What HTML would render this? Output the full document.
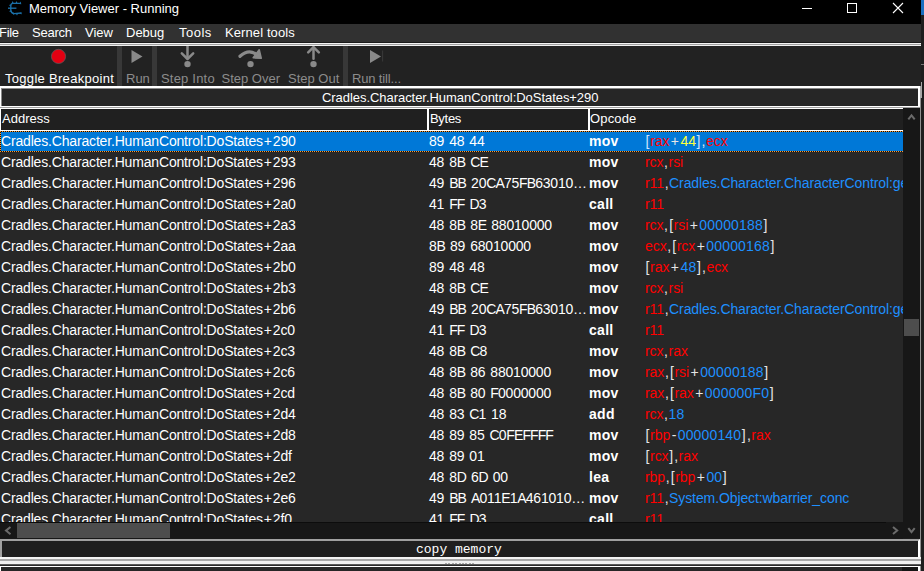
<!DOCTYPE html>
<html><head><meta charset="utf-8">
<style>
*{margin:0;padding:0;box-sizing:border-box}
html,body{width:924px;height:571px;overflow:hidden;background:#1c1c1c}
body{position:relative;font-family:"Liberation Sans",sans-serif;font-size:13px;color:#fff}
.a{position:absolute}
.t{position:absolute;white-space:nowrap;line-height:15px}
#title{left:0;top:0;width:921px;height:24px;background:#000}
#menu{left:0;top:24px;width:921px;height:18px;background:#313131}
#tb{left:0;top:46px;width:921px;height:40px;background:#222}
.sep{position:absolute;top:0;width:5px;height:40px;background:#383838}
.lbl{color:#8c8c8c}
.row{position:absolute;left:0;width:903px;height:21px;line-height:21px;white-space:nowrap;overflow:hidden;font-size:14px}
.row span{position:absolute;top:0px}
.row .ca{left:1px;letter-spacing:-0.17px}
.row .ca i{font-style:normal;padding:0 1px}
.row .cb{left:429px;letter-spacing:-0.2px;word-spacing:1.3px}
.row .cb b{font-weight:normal;letter-spacing:-0.9px}
.row .cc{left:589px;font-weight:bold;letter-spacing:0.3px}
.row .cd{left:645px;letter-spacing:-0.05px}
.row .cd .n{letter-spacing:0.15px}
.row .cd .s{letter-spacing:-0.1px}
.row .cd .p{padding:0 1.5px}
.row .cd .q{padding:0 0.6px}
.row .cd span{position:static}
.sel{background:#0078d7}
.sel:after{content:"";position:absolute;left:0;top:0;right:0;bottom:0;background:repeating-linear-gradient(90deg,#ff9a2e 0,#ff9a2e 1px,#101010 1px,#101010 2px) top left/100% 1px no-repeat,repeating-linear-gradient(90deg,#ff9a2e 0,#ff9a2e 1px,#101010 1px,#101010 2px) bottom left/100% 1px no-repeat,repeating-linear-gradient(180deg,#ff9a2e 0,#ff9a2e 1px,#101010 1px,#101010 2px) top left/1px 100% no-repeat}
.r{color:#ff0000}
.n,.s{color:#1e90ff}
.w{color:#e6e6e6}
.y{color:#ffff3c}
.b{color:#cfe4ff}
.sel .r{color:#ff0000}
</style></head><body>
<!-- title bar -->
<div id="title" class="a">
  <svg class="a" style="left:4px;top:0px" width="20" height="17" viewBox="0 0 20 17">
    <g fill="none" stroke="#1b70a8" stroke-width="1.35" stroke-linejoin="round">
      <path d="M17 3.4 L8.8 3.4 Q6.8 3.6 6.8 6 L6.8 10.2 Q7.2 13.4 10.2 13.6 L17.4 13"/>
      <path d="M4 8.2 L12.4 8.2"/>
    </g>
    <g fill="#1b70a8">
      <path d="M7.6 3.6 L8.6 1 L9.8 3.6Z"/><path d="M11.4 3.6 L12.5 0.9 L13.6 3.6Z"/><path d="M15.2 3.9 L16.7 1.4 L17.3 4.3Z"/>
      <path d="M8.4 12.6 L9.4 15 L10.8 13.2Z"/><path d="M11.8 13.4 L13 15.4 L14.2 13.3Z"/><path d="M15.6 13.1 L17.4 14.6 L17.6 12.4Z"/>
      <path d="M7 4.6 L4.9 4.9 L6.6 6.6Z"/><path d="M7 10.2 L4.9 11.3 L7.4 12Z"/>
    </g>
  </svg>
  <div class="t" style="left:29px;top:1px">Memory Viewer - Running</div>
  <div class="a" style="left:802px;top:8px;width:10px;height:1px;background:#fff"></div>
  <div class="a" style="left:847px;top:3px;width:10px;height:10px;border:1px solid #fff"></div>
  <svg class="a" style="left:892px;top:2px" width="12" height="12" viewBox="0 0 12 12"><path d="M1 1 L11 11 M11 1 L1 11" stroke="#fff" stroke-width="1.1"/></svg>
</div>
<div class="a" style="left:921px;top:0;width:3px;height:15px;background:#1a6fc0"></div>
<div class="a" style="left:921px;top:15px;width:3px;height:556px;background:#1e1e1e"></div>
<div class="a" style="left:920px;top:24px;width:1px;height:58px;background:#2a2a2a"></div>
<div class="a" style="left:920px;top:82px;width:2px;height:16px;background:#a8a8a8"></div>
<div class="a" style="left:920px;top:98px;width:1px;height:473px;background:#909090"></div>
<div class="a" style="left:921px;top:64px;width:3px;height:1px;background:#777"></div>

<!-- menu -->
<div id="menu" class="a">
  <div class="t" style="left:-1px;top:1px;letter-spacing:-0.3px">File</div>
  <div class="t" style="left:32px;top:1px;letter-spacing:-0.25px">Search</div>
  <div class="t" style="left:85px;top:1px">View</div>
  <div class="t" style="left:126px;top:1px">Debug</div>
  <div class="t" style="left:179px;top:1px;letter-spacing:0.5px">Tools</div>
  <div class="t" style="left:225px;top:1px;letter-spacing:0.1px">Kernel tools</div>
</div>
<div class="a" style="left:0;top:42px;width:921px;height:1px;background:#1a1a1a"></div>
<div class="a" style="left:0;top:43px;width:921px;height:1px;background:#f4f4f4"></div>
<div class="a" style="left:0;top:44px;width:921px;height:1px;background:#a0a0a0"></div>
<div class="a" style="left:0;top:45px;width:921px;height:1px;background:#f0f0f0"></div>

<!-- toolbar -->
<div id="tb" class="a">
  <svg class="a" style="left:48px;top:0px" width="22" height="22" viewBox="0 0 22 22"><circle cx="10.5" cy="10.4" r="7.1" fill="#e30012" stroke="#5a6060" stroke-width="0.7"/></svg>
  <div class="t" style="left:5px;top:25px;letter-spacing:0.3px">Toggle Breakpoint</div>
  <div class="sep" style="left:117px"></div>
  <svg class="a" style="left:128.8px;top:3px" width="16" height="16" viewBox="0 0 16 16"><path d="M2.5 1 L13.5 7.5 L2.5 14 Z" fill="#8a8a8a"/></svg>
  <div class="t lbl" style="left:126px;top:25px">Run</div>
  <div class="sep" style="left:152px"></div>
  <svg class="a" style="left:179px;top:0px" width="18" height="22" viewBox="0 0 18 22"><g stroke="#8a8a8a" stroke-width="2.5" fill="none" stroke-linecap="round" stroke-linejoin="round"><path d="M8.5 0 V12"/><path d="M2.8 7.4 L8.5 13 L14.2 7.4"/></g><circle cx="8.5" cy="18.1" r="3.2" fill="#8a8a8a"/></svg>
  <div class="t lbl" style="left:161px;top:25px;letter-spacing:0.2px">Step Into</div>
  <svg class="a" style="left:236px;top:0px" width="28" height="22" viewBox="0 0 28 22"><path d="M4 10.3 Q13 2 21.5 9.2" stroke="#8a8a8a" stroke-width="3.2" fill="none" stroke-linecap="round"/><path d="M23.2 3.8 L25.2 12.2 L17.2 11.8 Z" fill="#8a8a8a" stroke="#8a8a8a" stroke-width="1.6" stroke-linejoin="round"/><circle cx="14.5" cy="18.1" r="3.2" fill="#8a8a8a"/></svg>
  <div class="t lbl" style="left:221.5px;top:25px">Step Over</div>
  <svg class="a" style="left:305px;top:0px" width="18" height="22" viewBox="0 0 18 22"><g stroke="#8a8a8a" stroke-width="2.5" fill="none" stroke-linecap="round" stroke-linejoin="round"><path d="M8.5 1.5 V12.8"/><path d="M3.2 6.3 L8.5 1.1 L13.8 6.3"/></g><circle cx="8.5" cy="18.1" r="3.2" fill="#8a8a8a"/></svg>
  <div class="t lbl" style="left:288px;top:25px">Step Out</div>
  <div class="sep" style="left:343px"></div>
  <svg class="a" style="left:368px;top:3px" width="18" height="16" viewBox="0 0 18 16"><path d="M2 1 L13 7.5 L2 14 Z" fill="#8a8a8a"/><rect x="14.2" y="1.5" width="0.9" height="11" fill="#3c3c3c"/></svg>
  <div class="t lbl" style="left:352px;top:25px;letter-spacing:-0.15px">Run till...</div>
</div>

<!-- address box -->
<div class="a" style="left:0;top:86px;width:920px;height:21px;border-top:2px solid #fff;border-left:1px solid #fff;border-right:2px solid #fff;border-bottom:1px solid #fff;background:#262626"></div>
<div class="a" style="left:1px;top:88px;width:917px;height:1px;background:#8a8a8a"></div>
<div class="a" style="left:1px;top:88px;width:1px;height:18px;background:#8a8a8a"></div>
<div class="a" style="left:0;top:107px;width:920px;height:1px;background:#a0a0a0"></div>
<div class="t" style="left:322px;top:90px;letter-spacing:-0.05px">Cradles.Character.HumanControl:DoStates+290</div>

<!-- header -->
<div class="a" style="left:0;top:108px;width:903px;height:22px;background:#202020;border-top:1px solid #fff;border-left:1px solid #fff"></div>
<div class="a" style="left:0;top:130px;width:903px;height:1px;background:#fff"></div>
<div class="a" style="left:427px;top:109px;width:2px;height:21px;background:#fff"></div>
<div class="a" style="left:588px;top:109px;width:2px;height:21px;background:#fff"></div>
<div class="t" style="left:2px;top:111px">Address</div>
<div class="t" style="left:430px;top:111px;letter-spacing:-0.3px">Bytes</div>
<div class="t" style="left:590px;top:111px;letter-spacing:0.15px">Opcode</div>

<!-- body -->
<div class="a" style="left:0;top:131px;width:903px;height:391px;background:#272727;overflow:hidden">
<div class="a" style="left:0;top:-131px;width:903px;height:522px">
<div class="row sel" style="top:131px"><span class="ca">Cradles.Character.HumanControl:DoStates<i>+</i>290</span><span class="cb">89 48 44</span><span class="cc">mov</span><span class="cd"><span class="b q">[</span><span class="r">rax</span><span class="w p">+</span><span class="y">44</span><span class="b q">]</span><span class="w q">,</span><span class="r">ecx</span></span></div>
<div class="row" style="top:152px"><span class="ca">Cradles.Character.HumanControl:DoStates<i>+</i>293</span><span class="cb">48 8<b>B</b> <b>CE</b></span><span class="cc">mov</span><span class="cd"><span class="r">rcx</span><span class="w q">,</span><span class="r">rsi</span></span></div>
<div class="row" style="top:173px"><span class="ca">Cradles.Character.HumanControl:DoStates<i>+</i>296</span><span class="cb">49 <b>BB</b> 20<b>CA</b>75<b>FB</b>63010…</span><span class="cc">mov</span><span class="cd"><span class="r">r11</span><span class="w q">,</span><span class="s">Cradles.Character.CharacterControl:get_</span></span></div>
<div class="row" style="top:194px"><span class="ca">Cradles.Character.HumanControl:DoStates<i>+</i>2a0</span><span class="cb">41 <b>FF</b> <b>D</b>3</span><span class="cc">call</span><span class="cd"><span class="r">r11</span></span></div>
<div class="row" style="top:215px"><span class="ca">Cradles.Character.HumanControl:DoStates<i>+</i>2a3</span><span class="cb">48 8<b>B</b> 8<b>E</b> 88010000</span><span class="cc">mov</span><span class="cd"><span class="r">rcx</span><span class="w q">,</span><span class="w q">[</span><span class="r">rsi</span><span class="w p">+</span><span class="n">00000188</span><span class="w q">]</span></span></div>
<div class="row" style="top:236px"><span class="ca">Cradles.Character.HumanControl:DoStates<i>+</i>2aa</span><span class="cb">8<b>B</b> 89 68010000</span><span class="cc">mov</span><span class="cd"><span class="r">ecx</span><span class="w q">,</span><span class="w q">[</span><span class="r">rcx</span><span class="w p">+</span><span class="n">00000168</span><span class="w q">]</span></span></div>
<div class="row" style="top:257px"><span class="ca">Cradles.Character.HumanControl:DoStates<i>+</i>2b0</span><span class="cb">89 48 48</span><span class="cc">mov</span><span class="cd"><span class="w q">[</span><span class="r">rax</span><span class="w p">+</span><span class="n">48</span><span class="w q">]</span><span class="w q">,</span><span class="r">ecx</span></span></div>
<div class="row" style="top:278px"><span class="ca">Cradles.Character.HumanControl:DoStates<i>+</i>2b3</span><span class="cb">48 8<b>B</b> <b>CE</b></span><span class="cc">mov</span><span class="cd"><span class="r">rcx</span><span class="w q">,</span><span class="r">rsi</span></span></div>
<div class="row" style="top:299px"><span class="ca">Cradles.Character.HumanControl:DoStates<i>+</i>2b6</span><span class="cb">49 <b>BB</b> 20<b>CA</b>75<b>FB</b>63010…</span><span class="cc">mov</span><span class="cd"><span class="r">r11</span><span class="w q">,</span><span class="s">Cradles.Character.CharacterControl:get_</span></span></div>
<div class="row" style="top:320px"><span class="ca">Cradles.Character.HumanControl:DoStates<i>+</i>2c0</span><span class="cb">41 <b>FF</b> <b>D</b>3</span><span class="cc">call</span><span class="cd"><span class="r">r11</span></span></div>
<div class="row" style="top:341px"><span class="ca">Cradles.Character.HumanControl:DoStates<i>+</i>2c3</span><span class="cb">48 8<b>B</b> <b>C</b>8</span><span class="cc">mov</span><span class="cd"><span class="r">rcx</span><span class="w q">,</span><span class="r">rax</span></span></div>
<div class="row" style="top:362px"><span class="ca">Cradles.Character.HumanControl:DoStates<i>+</i>2c6</span><span class="cb">48 8<b>B</b> 86 88010000</span><span class="cc">mov</span><span class="cd"><span class="r">rax</span><span class="w q">,</span><span class="w q">[</span><span class="r">rsi</span><span class="w p">+</span><span class="n">00000188</span><span class="w q">]</span></span></div>
<div class="row" style="top:383px"><span class="ca">Cradles.Character.HumanControl:DoStates<i>+</i>2cd</span><span class="cb">48 8<b>B</b> 80 <b>F</b>0000000</span><span class="cc">mov</span><span class="cd"><span class="r">rax</span><span class="w q">,</span><span class="w q">[</span><span class="r">rax</span><span class="w p">+</span><span class="n">000000F0</span><span class="w q">]</span></span></div>
<div class="row" style="top:404px"><span class="ca">Cradles.Character.HumanControl:DoStates<i>+</i>2d4</span><span class="cb">48 83 <b>C</b>1 18</span><span class="cc">add</span><span class="cd"><span class="r">rcx</span><span class="w q">,</span><span class="n">18</span></span></div>
<div class="row" style="top:425px"><span class="ca">Cradles.Character.HumanControl:DoStates<i>+</i>2d8</span><span class="cb">48 89 85 <b>C</b>0<b>FEFFFF</b></span><span class="cc">mov</span><span class="cd"><span class="w q">[</span><span class="r">rbp</span><span class="w p">-</span><span class="n">00000140</span><span class="w q">]</span><span class="w q">,</span><span class="r">rax</span></span></div>
<div class="row" style="top:446px"><span class="ca">Cradles.Character.HumanControl:DoStates<i>+</i>2df</span><span class="cb">48 89 01</span><span class="cc">mov</span><span class="cd"><span class="w q">[</span><span class="r">rcx</span><span class="w q">]</span><span class="w q">,</span><span class="r">rax</span></span></div>
<div class="row" style="top:467px"><span class="ca">Cradles.Character.HumanControl:DoStates<i>+</i>2e2</span><span class="cb">48 8<b>D</b> 6<b>D</b> 00</span><span class="cc">lea</span><span class="cd"><span class="r">rbp</span><span class="w q">,</span><span class="w q">[</span><span class="r">rbp</span><span class="w p">+</span><span class="n">00</span><span class="w q">]</span></span></div>
<div class="row" style="top:488px"><span class="ca">Cradles.Character.HumanControl:DoStates<i>+</i>2e6</span><span class="cb">49 <b>BB</b> <b>A</b>011<b>E</b>1<b>A</b>461010…</span><span class="cc">mov</span><span class="cd"><span class="r">r11</span><span class="w q">,</span><span class="s">System.Object:wbarrier_conc</span></span></div>
<div class="row" style="top:509px"><span class="ca">Cradles.Character.HumanControl:DoStates<i>+</i>2f0</span><span class="cb">41 <b>FF</b> <b>D</b>3</span><span class="cc">call</span><span class="cd"><span class="r">r11</span></span></div>
</div>
</div>

<!-- vscroll -->
<div class="a" style="left:903px;top:108px;width:17px;height:430px;background:#171717"></div>
<svg class="a" style="left:906px;top:112px" width="11" height="10" viewBox="0 0 11 10"><path d="M2.3 7.3 L5.5 3.3 L8.7 7.3" stroke="#6a6a6a" stroke-width="2" fill="none"/></svg>
<div class="a" style="left:904px;top:319px;width:15px;height:17px;background:#4d4d4d"></div>
<svg class="a" style="left:906px;top:525px" width="11" height="10" viewBox="0 0 11 10"><path d="M2.3 3.2 L5.5 7.2 L8.7 3.2" stroke="#6a6a6a" stroke-width="2" fill="none"/></svg>

<!-- hscroll -->
<div class="a" style="left:0;top:522px;width:903px;height:17px;background:#171717"></div>
<div class="a" style="left:0;top:522px;width:886px;height:1px;background:#0c0c0c"></div>
<svg class="a" style="left:4px;top:525px" width="10" height="11" viewBox="0 0 10 11"><path d="M6.5 2 L2 5.6 L6.5 9.2" stroke="#6a6a6a" stroke-width="2" fill="none"/></svg>
<div class="a" style="left:17px;top:523px;width:153px;height:15px;background:#4d4d4d"></div>
<svg class="a" style="left:890px;top:525px" width="10" height="11" viewBox="0 0 10 11"><path d="M3 2 L7.2 5.5 L3 9" stroke="#6a6a6a" stroke-width="2" fill="none"/></svg>

<!-- copy memory box -->
<div class="a" style="left:0;top:539px;width:920px;height:18px;background:#1f1f1f;border-top:2px solid #a0a0a0;border-left:2px solid #a0a0a0;border-right:2px solid #fff"></div>
<div class="t" style="left:416px;top:542px;font-family:'Liberation Mono',monospace;font-size:13px">copy memory</div>
<div class="a" style="left:0;top:557px;width:921px;height:2px;background:#f4f4f4"></div>
<div class="a" style="left:0;top:559px;width:921px;height:2px;background:#a8a8a8"></div>
<div class="a" style="left:0;top:561px;width:921px;height:3px;background:#f0f0f0"></div>
<div class="a" style="left:0;top:564px;width:921px;height:1px;background:#5a5a5a"></div>
<div class="a" style="left:0;top:565px;width:921px;height:1px;background:#2a2a2a"></div>
<div class="a" style="left:0;top:566px;width:920px;height:5px;background:#262626;border-top:1px solid #fff;border-left:1px solid #fff;border-right:2px solid #fff"></div>
<div class="a" style="left:902px;top:567px;width:16px;height:4px;background:#141414"></div>
<div class="a" style="left:445px;top:563px;width:30px;height:1px;background:repeating-linear-gradient(90deg,#a8a8a8 0,#a8a8a8 2px,transparent 2px,transparent 3.4px)"></div>
</body></html>
